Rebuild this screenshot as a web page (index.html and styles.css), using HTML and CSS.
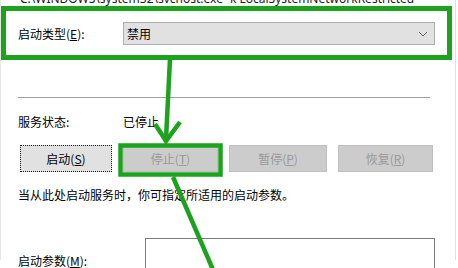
FILE: index.html
```html
<!DOCTYPE html>
<html lang="zh-CN">
<head>
<meta charset="utf-8">
<title>服务属性</title>
<link rel="stylesheet" href="styles.css">
</head>
<body>
<div class="page">
  <div class="dialog">
    <div class="path">C:\WINDOWS\system32\svchost.exe -k LocalSystemNetworkRestricted</div>
    <div class="startup-box">
      <span class="label">启动类型(<u>E</u>):</span>
      <div class="combo">
        <span class="combo-value">禁用</span>
        <svg class="chevron" width="10" height="6" viewBox="0 0 10 6"><path d="M1 1 L5 5 L9 1" fill="none" stroke="#606060" stroke-width="1"/></svg>
      </div>
    </div>
    <div class="section">
      <div class="sep"></div>
      <div class="status-row">
        <span class="label">服务状态:</span>
        <span class="value">已停止</span>
      </div>
      <div class="buttons">
        <div class="btn focused w92">启动(<u>S</u>)</div>
        <div class="btn disabled w95">停止(<u>T</u>)</div>
        <div class="btn disabled w98">暂停(<u>P</u>)</div>
        <div class="btn disabled w95">恢复(<u>R</u>)</div>
      </div>
      <p class="hint">当从此处启动服务时，你可指定所适用的启动参数。</p>
      <div class="param-row">
        <span class="label">启动参数(<u>M</u>):</span>
        <div class="input"></div>
      </div>
    </div>
  </div>
  <svg class="annotations" width="458" height="268" viewBox="0 0 458 268">
    <g fill="none" stroke="#1ca21c" stroke-width="4.5">
      <rect x="120.5" y="145.5" width="100" height="29"/>
      <path d="M170 59 L166 139"/>
      <path d="M155 124 L166 141 L180 122" stroke-linejoin="miter"/>
      <path d="M173 177 L214 272"/>
    </g>
  </svg>
</div>
</body>
</html>
```

FILE: styles.css
```css
html, body {
  margin: 0;
  padding: 0;
  background: #ffffff;
}

.page {
  position: relative;
  width: 458px;
  height: 268px;
  overflow: hidden;
  background: #ffffff;
  font-family: "Noto Sans", "Noto Sans CJK SC", sans-serif;
  font-size: 12px;
  color: #000000;
}

.dialog {
  width: 456px;
  height: 268px;
  box-sizing: border-box;
  border-left: 1px solid #e6e6e6;
  border-right: 1px solid #e0e0e0;
}

.path {
  margin-top: -8px;
  height: 14px;
  line-height: 14px;
  padding-left: 19px;
  white-space: nowrap;
  color: #1a1a1a;
}

.label {
  font-family: "Noto Sans CJK SC", sans-serif;
  white-space: nowrap;
}

.startup-box {
  box-sizing: border-box;
  width: 451px;
  height: 54px;
  border: 5px solid #1ca21c;
  padding: 11px 12px 10px 12px;
  display: grid;
  grid-template-columns: 105px 1fr;
  align-items: center;
}

.combo {
  height: 23px;
  box-sizing: border-box;
  border: 1px solid #adadad;
  background: #e1e1e1;
  display: flex;
  align-items: center;
  justify-content: space-between;
  padding: 0 6px 0 3px;
  font-family: "Noto Sans CJK SC", sans-serif;
}

.chevron {
  display: block;
}

.section {
  margin-left: 17px;
  margin-top: 37px;
  font-family: "Noto Sans CJK SC", sans-serif;
}

.sep {
  width: 412px;
  height: 1px;
  background: #a0a0a0;
}

.status-row {
  margin-top: 16px;
  display: grid;
  grid-template-columns: 105px auto;
  line-height: 16px;
}

.buttons {
  margin-top: 15px;
  margin-left: 2px;
  display: flex;
  gap: 11px;
}

.btn {
  height: 27px;
  box-sizing: border-box;
  border: 1px solid #adadad;
  background: #e1e1e1;
  display: flex;
  align-items: center;
  justify-content: center;
  line-height: 16px;
}

.btn.focused {
  border: 1px dotted #1a1a1a;
}

.btn.disabled {
  background: #cccccc;
  border-color: #bfbfbf;
  color: #9a9a9a;
}

.w92 { width: 92px; }
.w95 { width: 95px; }
.w98 { width: 98px; }

.hint {
  margin: 15px 0 0 0;
  line-height: 16px;
  white-space: nowrap;
}

.param-row {
  margin-top: 35px;
  display: grid;
  grid-template-columns: 127px 290px;
  align-items: center;
}

.input {
  height: 44px;
  box-sizing: border-box;
  border: 1px solid #7a7a7a;
  background: #ffffff;
}

.annotations {
  position: absolute;
  left: 0;
  top: 0;
  pointer-events: none;
}
```
